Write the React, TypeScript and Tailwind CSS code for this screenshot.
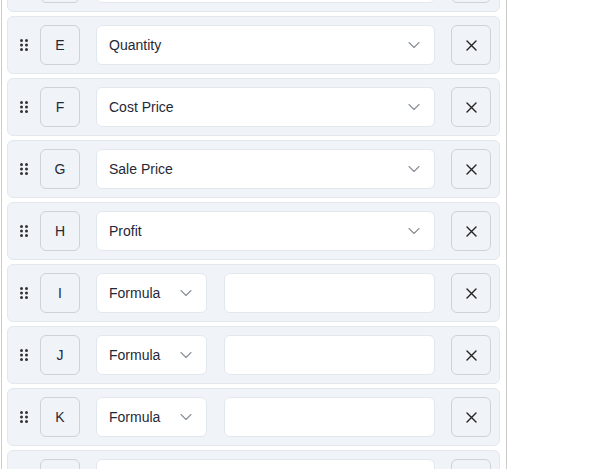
import { ChevronDown } from "lucide-react";

type Column = {
    letter: string;
    kind: "field" | "formula";
    value?: string;
};

const columns: Column[] = [
    { letter: "D", kind: "field", value: "Product" },
    { letter: "E", kind: "field", value: "Quantity" },
    { letter: "F", kind: "field", value: "Cost Price" },
    { letter: "G", kind: "field", value: "Sale Price" },
    { letter: "H", kind: "field", value: "Profit" },
    { letter: "I", kind: "formula" },
    { letter: "J", kind: "formula" },
    { letter: "K", kind: "formula" },
    { letter: "L", kind: "field", value: "Margin" },
];

function GripIcon() {
    return (
        <svg width="8" height="12" viewBox="0 0 8 12" className="shrink-0 text-[#333]">
            {[1.5, 6.5].map((cx) =>
                [1.5, 6, 10.5].map((cy) => (
                    <circle key={`${cx}-${cy}`} cx={cx} cy={cy} r="1.5" fill="currentColor" />
                ))
            )}
        </svg>
    );
}

function CloseIcon() {
    return (
        <svg width="11" height="11" viewBox="0 0 11 11" className="text-[#222]">
            <path d="M1 1 10 10M10 1 1 10" stroke="currentColor" strokeWidth="1.4" strokeLinecap="round" />
        </svg>
    );
}

function SelectBox({ label, className }: { label: string; className: string }) {
    return (
        <div
            className={`flex h-10 items-center justify-between rounded-md border border-[#e2e8f0] bg-white pl-3 pr-[10px] text-[14px] text-[#1f2937] ${className}`}
        >
            <span>{label}</span>
            <ChevronDown size={20} strokeWidth={1.3} className="text-[#8a8f98]" />
        </div>
    );
}

function ColumnRow({ column }: { column: Column }) {
    return (
        <div className="flex h-[58px] shrink-0 items-center rounded-md border border-[#e3e8ef] bg-[#f0f4f8] pl-3 pr-[8px]">
            <GripIcon />
            <div className="ml-3 flex h-10 w-10 shrink-0 items-center justify-center rounded-md border border-[#cfd3d8] text-[14px] text-[#1f2937]">
                {column.letter}
            </div>
            {column.kind === "field" ? (
                <SelectBox label={column.value ?? ""} className="ml-[16px] flex-1" />
            ) : (
                <div className="ml-[16px] flex flex-1">
                    <SelectBox label="Formula" className="w-[111px] shrink-0" />
                    <input
                        type="text"
                        className="ml-[17px] h-10 min-w-0 flex-1 rounded-md border border-[#e2e8f0] bg-white px-3 text-[14px] outline-none"
                    />
                </div>
            )}
            <button className="ml-[16px] flex h-10 w-10 shrink-0 items-center justify-center rounded-md border border-[#cfd3d8] bg-[#f0f4f8]">
                <CloseIcon />
            </button>
        </div>
    );
}

export default function App() {
    return (
        <div className="h-[469px] overflow-hidden bg-white font-['Liberation_Sans',Arial,sans-serif]">
            <div className="ml-px flex h-full w-[506px] flex-col border-x border-[#cccccc] pl-[5px] pr-[6px]">
                <div className="-mt-[46px] flex flex-col gap-1">
                    {columns.map((column) => (
                        <ColumnRow key={column.letter} column={column} />
                    ))}
                </div>
            </div>
        </div>
    );
}
